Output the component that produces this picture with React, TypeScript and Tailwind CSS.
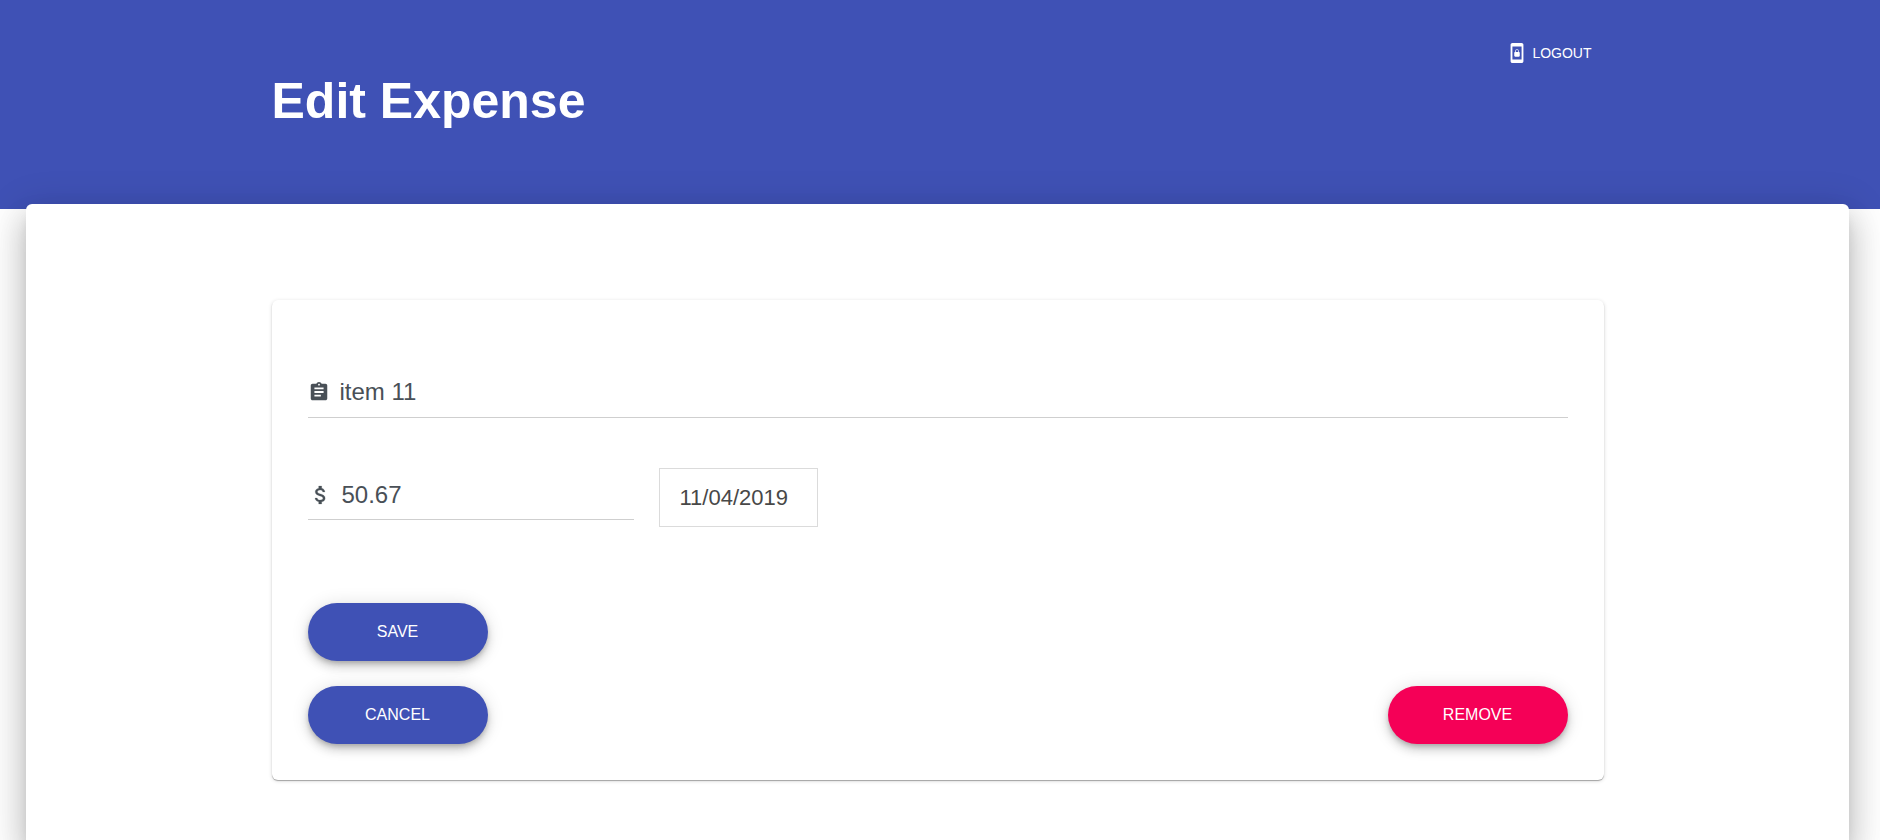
import { MdAssignment, MdScreenLockPortrait } from "react-icons/md";

const pill =
  "h-[58px] w-[180px] rounded-full text-base font-normal uppercase text-white shadow-[0_3px_5px_-1px_rgba(0,0,0,0.2),0_6px_10px_0_rgba(0,0,0,0.14),0_1px_18px_0_rgba(0,0,0,0.12)]";

function DollarIcon() {
  return (
    <svg viewBox="0 0 24 24" className="size-6 shrink-0" fill="currentColor" stroke="currentColor" strokeWidth="0.2" aria-hidden="true">
      <path d="M12.5 10.9c-2.27-.59-3-1.2-3-2.15 0-1.09 1.01-1.85 2.7-1.85 1.78 0 2.44.85 2.5 2.1h2.21c-.07-1.72-1.12-3.3-3.21-3.81V3h-3v2.16c-1.94.42-3.5 1.68-3.5 3.61 0 2.31 1.91 3.46 4.7 4.13 2.5.6 3 1.48 3 2.41 0 .69-.49 1.79-2.7 1.79-2.06 0-2.87-.92-2.98-2.1h-2.2c.12 2.19 1.76 3.42 3.68 3.83V21h3v-2.15c1.95-.37 3.5-1.5 3.5-3.55 0-2.84-2.43-3.81-4.7-4.4z" />
    </svg>
  );
}

export default function App() {
  return (
    <div className="min-h-screen overflow-x-clip bg-white font-['Liberation_Sans',Arial,sans-serif]">
      <header className="h-[209px] bg-[#3f51b5] pr-[31px] pl-[26px]">
        <div className="mx-auto flex max-w-[1332px] items-start justify-between">
          <h1 className="pt-[72px] text-[50px] leading-[58px] font-bold text-white">Edit Expense</h1>
          <button type="button" className="mt-[42px] mr-3 flex items-center gap-1 text-sm leading-5 text-white uppercase">
            <MdScreenLockPortrait className="size-[22px]" aria-hidden="true" />
            Logout
          </button>
        </div>
      </header>

      <main className="relative -mt-[5px] mr-[31px] ml-[26px] min-h-[calc(100vh-204px)] rounded-t-md bg-white pt-24 shadow-[0_10px_13px_-6px_rgba(0,0,0,0.2),0_20px_31px_3px_rgba(0,0,0,0.14),0_8px_38px_7px_rgba(0,0,0,0.12)]">
        <form
          className="mx-auto max-w-[1332px] rounded-md px-9 pt-[72px] pb-9 shadow-[0_1px_4px_0_rgba(0,0,0,0.14),0_1px_1px_0_rgba(0,0,0,0.3)]"
          onSubmit={(event) => event.preventDefault()}
        >
          <label className="flex h-[46px] items-center gap-2.5 border-b border-[#cfcfcf] pb-1.5 text-[#495057]">
            <MdAssignment className="size-[22px] shrink-0" aria-hidden="true" />
            <input
              type="text"
              aria-label="Description"
              defaultValue="item 11"
              className="w-full text-2xl leading-8 outline-none"
            />
          </label>

          <div className="mt-[50px] flex items-start gap-[25px]">
            <label className="flex h-[52px] w-[326px] items-center gap-2.5 border-b border-[#cfcfcf] pt-0.5 text-[#495057]">
              <DollarIcon />
              <input
                type="text"
                aria-label="Amount"
                defaultValue="50.67"
                className="w-full text-2xl leading-8 outline-none"
              />
            </label>
            <input
              type="text"
              aria-label="Date"
              defaultValue="11/04/2019"
              className="h-[59px] w-[159px] border border-[#dbdbdb] px-5 text-[22px] text-[#484848] outline-none"
            />
          </div>

          <button type="submit" className={`${pill} mt-[76px] block bg-[#3f51b5]`}>
            Save
          </button>
          <div className="mt-[25px] flex justify-between">
            <button type="button" className={`${pill} bg-[#3f51b5]`}>
              Cancel
            </button>
            <button type="button" className={`${pill} bg-[#f50057]`}>
              Remove
            </button>
          </div>
        </form>
      </main>
    </div>
  );
}
